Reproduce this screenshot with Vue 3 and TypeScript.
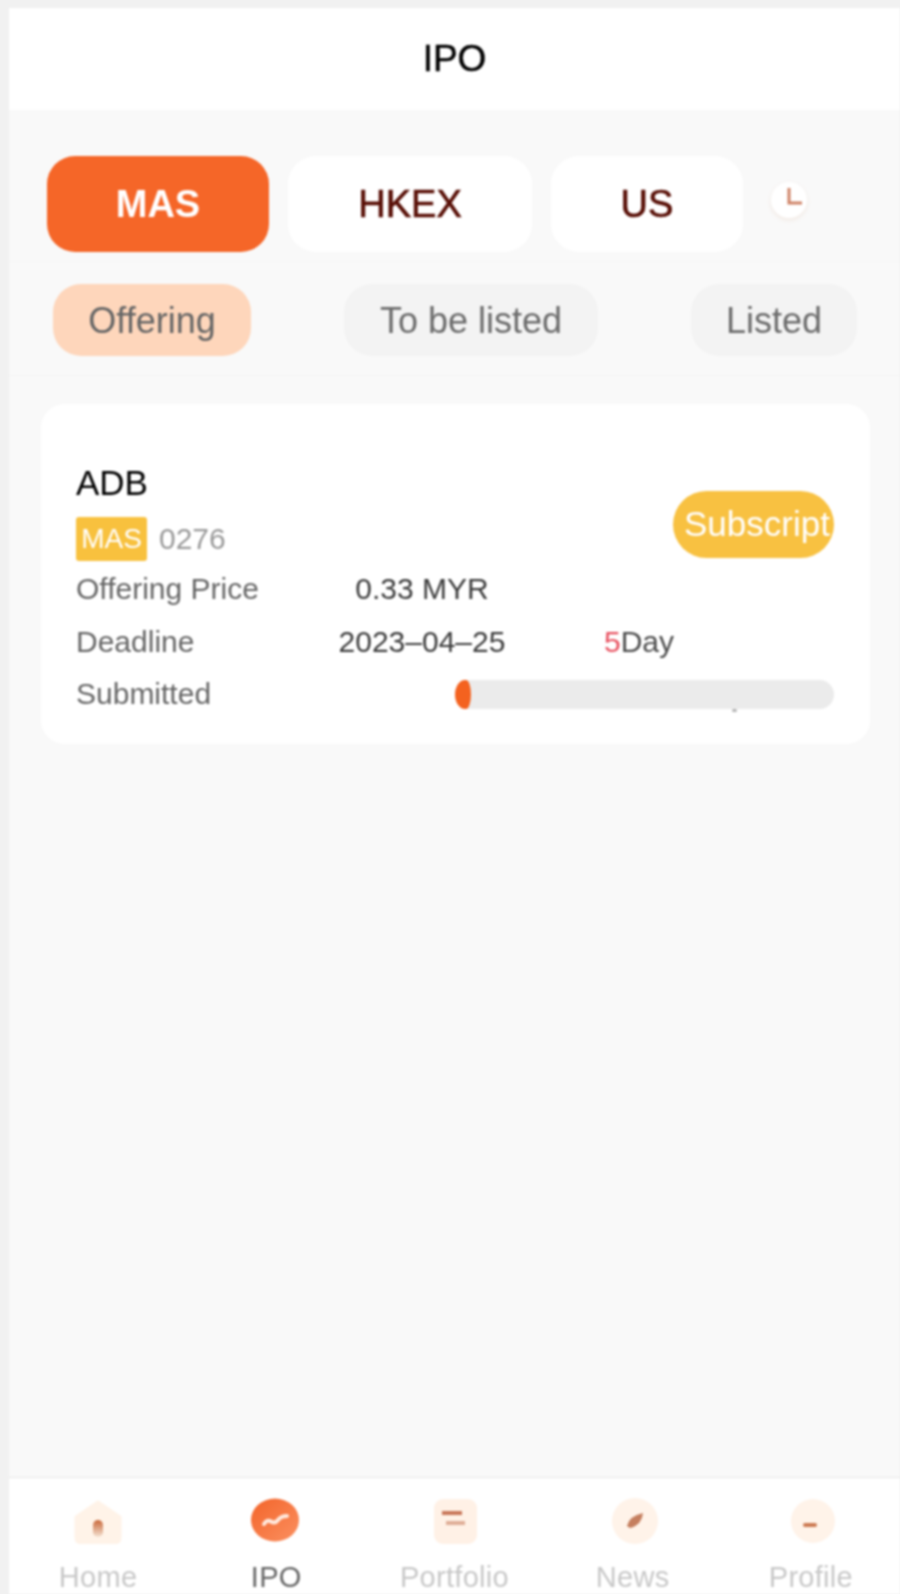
<template>
  <div class="page">
    <div class="screen">
      <header class="title-bar">IPO</header>

      <div class="markets">
        <button
          v-for="m in markets"
          :key="m.name"
          class="market"
          :class="{ active: m.name === activeMarket }"
          :style="{ width: m.width + 'px' }"
        >
          {{ m.name }}
        </button>
        <span class="clock">
          <svg width="36" height="36" viewBox="0 0 36 36">
            <path d="M18 6V21H31" fill="none" stroke="#cf8468" stroke-width="3" />
          </svg>
        </span>
      </div>

      <div class="statuses">
        <button
          v-for="s in statuses"
          :key="s.name"
          class="status"
          :class="{ active: s.name === activeStatus }"
          :style="{ width: s.width + 'px' }"
        >
          {{ s.name }}
        </button>
      </div>

      <main class="list">
        <section class="card">
          <div class="card-top">
            <div>
              <div class="stock-name">ADB</div>
              <div class="stock-meta">
                <span class="tag">MAS</span>
                <span class="code">0276</span>
              </div>
            </div>
            <button class="subscribe">Subscript</button>
          </div>

          <div class="details">
            <span class="label">Offering Price</span>
            <span class="value">0.33 MYR</span>
            <span></span>

            <span class="label">Deadline</span>
            <span class="value">2023–04–25</span>
            <span class="days"><em>5</em>Day</span>

            <span class="label">Submitted</span>
            <div class="progress">
              <div class="progress-fill" :style="{ width: progress + '%' }"></div>
              <i class="progress-mark"></i>
            </div>
          </div>
        </section>
      </main>

      <nav class="tabbar">
        <div v-for="t in tabs" :key="t.name" class="tab" :class="{ current: t.name === 'IPO' }">
          <svg width="50" height="46" viewBox="0 0 50 46" class="tab-icon">
            <defs>
              <linearGradient id="door" x1="0" y1="0" x2="0" y2="1">
                <stop offset="0" stop-color="#c9683a" />
                <stop offset="1" stop-color="#f4e2d2" />
              </linearGradient>
              <linearGradient id="ipo" x1="0" y1="0" x2="1" y2="1">
                <stop offset="0" stop-color="#f3642a" />
                <stop offset="1" stop-color="#fb9060" />
              </linearGradient>
            </defs>
            <template v-if="t.name === 'Home'">
              <path d="M25 4L47 19V39Q47 45 41 45H9Q3 45 3 39V19Z" fill="#fff3e8" stroke="#fff3e8" stroke-width="3" stroke-linejoin="round" />
              <rect x="20" y="22" width="10" height="17" rx="5" fill="url(#door)" />
            </template>
            <template v-else-if="t.name === 'IPO'">
              <ellipse cx="24" cy="22" rx="24" ry="21.5" fill="url(#ipo)" />
              <path d="M13 26Q16 21 20 23.5T27 22T36 18" fill="none" stroke="#ffe9dd" stroke-width="4" stroke-linecap="round" />
            </template>
            <template v-else-if="t.name === 'Portfolio'">
              <rect x="5" y="1" width="43" height="45" rx="9" fill="#fff1e6" />
              <rect x="13" y="13" width="20" height="4" fill="#c9785a" />
              <rect x="17" y="23" width="19" height="4" fill="#dfae98" />
            </template>
            <template v-else-if="t.name === 'News'">
              <circle cx="27" cy="23" r="23" fill="#fff3e9" />
              <path d="M19 28Q21 18 35 15Q34 27 22 30Z" fill="#c57f5f" />
            </template>
            <template v-else>
              <circle cx="27" cy="23" r="22" fill="#fff3e9" />
              <rect x="17" y="25" width="14" height="4" rx="2" fill="#cc7a52" />
            </template>
          </svg>
          <span class="tab-label">{{ t.name }}</span>
        </div>
      </nav>
    </div>
  </div>
</template>

<script setup lang="ts">
interface Sized {
  name: string;
  width: number;
}

const activeMarket = 'MAS';
const activeStatus = 'Offering';
const progress = 4.2;

const markets: Sized[] = [
  { name: 'MAS', width: 222 },
  { name: 'HKEX', width: 244 },
  { name: 'US', width: 192 },
];

const statuses: Sized[] = [
  { name: 'Offering', width: 198 },
  { name: 'To be listed', width: 254 },
  { name: 'Listed', width: 166 },
];

const tabs = [{ name: 'Home' }, { name: 'IPO' }, { name: 'Portfolio' }, { name: 'News' }, { name: 'Profile' }];
</script>

<style scoped>
.page {
  height: 1594px;
  box-sizing: border-box;
  padding: 8px 0 0 9px;
  background: #f1f1f1;
  overflow: hidden;
  font-family: "Liberation Sans", Arial, sans-serif;
}

.screen {
  height: 100%;
  display: flex;
  flex-direction: column;
  background: #f9f9f9;
  filter: blur(1px);
}

button {
  border: none;
  padding: 0;
  font-family: inherit;
  white-space: nowrap;
}

.title-bar {
  height: 102px;
  flex: none;
  display: flex;
  align-items: center;
  justify-content: center;
  background: #fff;
  color: #000;
  font-size: 37px;
  -webkit-text-stroke: 0.5px #000;
}

.markets {
  margin-top: 46px;
  padding: 0 0 10px 38px;
  height: 106px;
  box-sizing: border-box;
  display: flex;
  align-items: flex-start;
  gap: 19px;
  flex: none;
  border-bottom: 1px solid #f5f5f5;
}

.market {
  height: 96px;
  border-radius: 28px;
  background: #fff;
  color: #580f06;
  font-size: 38px;
  -webkit-text-stroke: 0.7px #580f06;
}

.market.active {
  background: #f56628;
  color: #fff;
  font-weight: 700;
  -webkit-text-stroke: 0;
}

.clock {
  width: 36px;
  height: 36px;
  margin: 26px 0 0 9px;
  border-radius: 50%;
  background: #fff;
  box-shadow: 0 2px 4px rgba(230, 200, 180, 0.3);
}

.clock svg {
  display: block;
}

.statuses {
  flex: none;
  height: 114px;
  box-sizing: border-box;
  padding: 22px 43px 0 44px;
  display: flex;
  align-items: flex-start;
  justify-content: space-between;
  border-bottom: 1px solid #f4f4f4;
}

.status {
  height: 72px;
  padding-top: 2px;
  border-radius: 28px;
  background: #f3f3f3;
  color: #6c6c6c;
  font-size: 36px;
}

.status.active {
  background: #fed6bb;
  color: #666;
}

.list {
  flex: 1;
  padding: 28px 30px 0 32px;
}

.card {
  height: 340px;
  box-sizing: border-box;
  padding: 59px 36px 0 35px;
  border-radius: 24px;
  background: #fff;
}

.card-top {
  display: flex;
  align-items: center;
  justify-content: space-between;
}

.stock-name {
  height: 40px;
  line-height: 40px;
  font-size: 35px;
  color: #000;
}

.stock-meta {
  margin-top: 14px;
  display: flex;
  align-items: center;
  gap: 12px;
}

.tag {
  width: 71px;
  height: 44px;
  display: flex;
  align-items: center;
  justify-content: center;
  border-radius: 3px;
  background: #f8c13e;
  color: #fff;
  font-size: 28px;
}

.code {
  font-size: 30px;
  color: #999;
}

.subscribe {
  width: 161px;
  height: 67px;
  margin-top: 24px;
  padding-left: 11px;
  text-align: left;
  border-radius: 34px;
  background: #f8c141;
  color: #fff;
  font-size: 35px;
  overflow: hidden;
}

.details {
  margin-top: 2px;
  display: grid;
  grid-template-columns: 250px 192px 1fr;
  grid-auto-rows: 52.5px;
  align-items: center;
  font-size: 30px;
}

.label {
  color: #666;
}

.value {
  color: #3c3c3c;
  text-align: center;
  white-space: nowrap;
}

.days {
  padding-left: 86px;
  color: #4c4c4c;
  white-space: nowrap;
}

.days em {
  font-style: normal;
  color: #e8505f;
}

.progress {
  grid-column: 2 / 4;
  position: relative;
  margin-left: 129px;
  height: 29px;
  border-radius: 15px;
  background: #ebebeb;
}

.progress-fill {
  height: 100%;
  border-radius: 10px 5px 5px 10px / 50%;
  background: #f4621f;
}

.progress-mark {
  position: absolute;
  left: 277px;
  bottom: -3px;
  width: 5px;
  height: 3px;
  border-radius: 2px;
  background: #b5b5b5;
}

.tabbar {
  flex: none;
  height: 117px;
  box-sizing: border-box;
  padding-top: 20px;
  display: grid;
  grid-template-columns: repeat(5, 1fr);
  background: #fff;
  border-top: 1px solid #e6e6e6;
}

.tab {
  display: flex;
  flex-direction: column;
  align-items: center;
}

.tab-icon {
  flex: none;
  display: block;
}

.tab-label {
  margin-top: 17px;
  line-height: 32px;
  font-size: 29px;
  letter-spacing: 0.3px;
  color: #c8c8c8;
}

.current .tab-label {
  color: #666;
}
</style>
